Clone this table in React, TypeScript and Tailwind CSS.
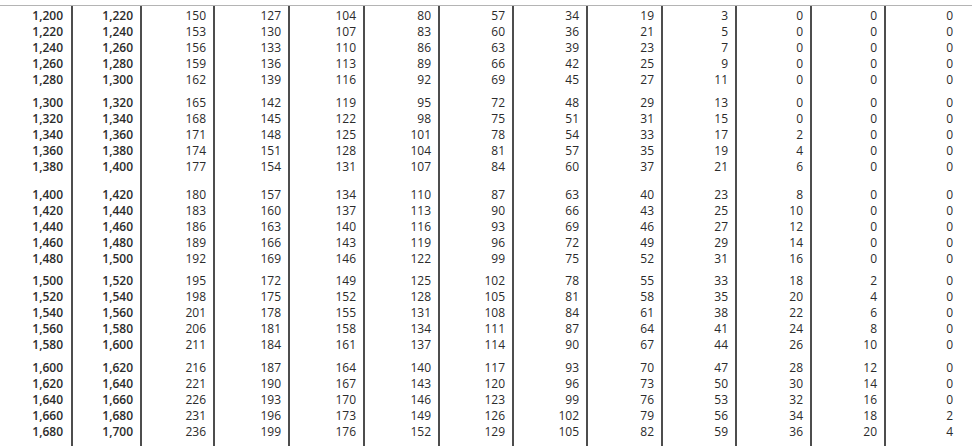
import { Fragment } from 'react';

const groups: string[][][] = [
    [
        ['1,200', '1,220', '150', '127', '104', '80', '57', '34', '19', '3', '0', '0', '0'],
        ['1,220', '1,240', '153', '130', '107', '83', '60', '36', '21', '5', '0', '0', '0'],
        ['1,240', '1,260', '156', '133', '110', '86', '63', '39', '23', '7', '0', '0', '0'],
        ['1,260', '1,280', '159', '136', '113', '89', '66', '42', '25', '9', '0', '0', '0'],
        ['1,280', '1,300', '162', '139', '116', '92', '69', '45', '27', '11', '0', '0', '0'],
    ],
    [
        ['1,300', '1,320', '165', '142', '119', '95', '72', '48', '29', '13', '0', '0', '0'],
        ['1,320', '1,340', '168', '145', '122', '98', '75', '51', '31', '15', '0', '0', '0'],
        ['1,340', '1,360', '171', '148', '125', '101', '78', '54', '33', '17', '2', '0', '0'],
        ['1,360', '1,380', '174', '151', '128', '104', '81', '57', '35', '19', '4', '0', '0'],
        ['1,380', '1,400', '177', '154', '131', '107', '84', '60', '37', '21', '6', '0', '0'],
    ],
    [
        ['1,400', '1,420', '180', '157', '134', '110', '87', '63', '40', '23', '8', '0', '0'],
        ['1,420', '1,440', '183', '160', '137', '113', '90', '66', '43', '25', '10', '0', '0'],
        ['1,440', '1,460', '186', '163', '140', '116', '93', '69', '46', '27', '12', '0', '0'],
        ['1,460', '1,480', '189', '166', '143', '119', '96', '72', '49', '29', '14', '0', '0'],
        ['1,480', '1,500', '192', '169', '146', '122', '99', '75', '52', '31', '16', '0', '0'],
    ],
    [
        ['1,500', '1,520', '195', '172', '149', '125', '102', '78', '55', '33', '18', '2', '0'],
        ['1,520', '1,540', '198', '175', '152', '128', '105', '81', '58', '35', '20', '4', '0'],
        ['1,540', '1,560', '201', '178', '155', '131', '108', '84', '61', '38', '22', '6', '0'],
        ['1,560', '1,580', '206', '181', '158', '134', '111', '87', '64', '41', '24', '8', '0'],
        ['1,580', '1,600', '211', '184', '161', '137', '114', '90', '67', '44', '26', '10', '0'],
    ],
    [
        ['1,600', '1,620', '216', '187', '164', '140', '117', '93', '70', '47', '28', '12', '0'],
        ['1,620', '1,640', '221', '190', '167', '143', '120', '96', '73', '50', '30', '14', '0'],
        ['1,640', '1,660', '226', '193', '170', '146', '123', '99', '76', '53', '32', '16', '0'],
        ['1,660', '1,680', '231', '196', '173', '149', '126', '102', '79', '56', '34', '18', '2'],
        ['1,680', '1,700', '236', '199', '176', '152', '129', '105', '82', '59', '36', '20', '4'],
    ],
];

// gap above each group, px
const gapClass = ['h-[2px]', 'h-[7px]', 'h-[12px]', 'h-[6px]', 'h-[7px]'];

const colWidths = [73, 69, 73, 75, 75, 75, 74, 74, 75, 74, 75, 74, 74];

const lineCls = (i: number) => (i < 12 ? 'border-r-2 border-[#4d4d4d]' : '');

function Spacer({ cls }: { cls: string }) {
    return (
        <tr>
            {colWidths.map((_, i) => (
                <td key={i} className={`${cls} p-0 ${lineCls(i)}`} />
            ))}
        </tr>
    );
}

export default function App() {
    return (
        <div className="w-[972px] h-[446px] overflow-hidden bg-white pt-[5px] font-['Open_Sans','Liberation_Sans',sans-serif] text-[12px] leading-4 text-[#2b2b2b]">
            <div className="border-t border-[#b4b4b4]">
                <table className="table-fixed border-separate border-spacing-0 w-[960px]">
                    <colgroup>
                        {colWidths.map((w, i) => (
                            <col key={i} style={{ width: w }} />
                        ))}
                    </colgroup>
                    <tbody>
                        {groups.map((rows, g) => (
                            <Fragment key={g}>
                                <Spacer cls={gapClass[g]} />
                                {rows.map((row, r) => (
                                    <tr key={r}>
                                        {row.map((v, i) => (
                                            <td
                                                key={i}
                                                className={`h-4 p-0 text-right ${i === 0 ? 'pr-[8px]' : 'pr-[7px]'} ${i < 2 ? 'font-semibold' : 'font-medium'} ${lineCls(i)}`}
                                            >
                                                {v}
                                            </td>
                                        ))}
                                    </tr>
                                ))}
                            </Fragment>
                        ))}
                        <Spacer cls="h-[12px]" />
                    </tbody>
                </table>
            </div>
        </div>
    );
}
